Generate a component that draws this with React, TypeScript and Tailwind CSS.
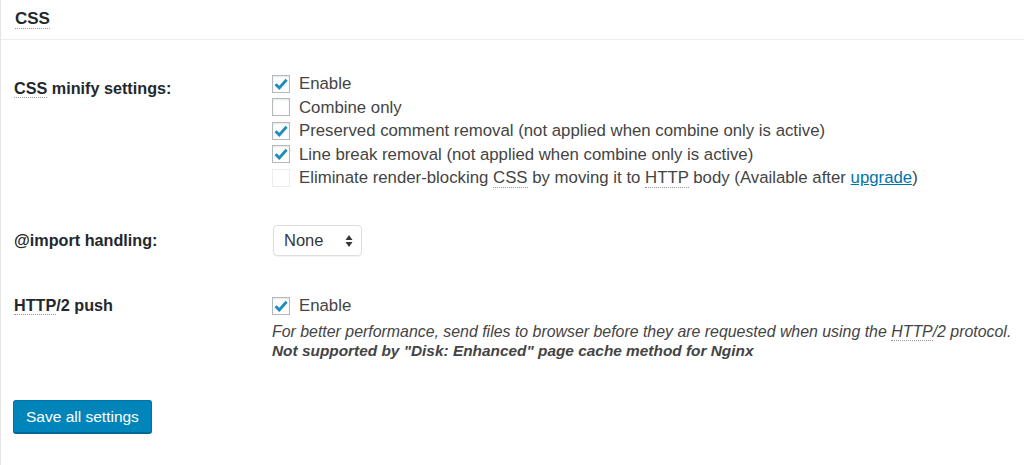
import React from 'react';

const Abbr: React.FC<{ children: React.ReactNode }> = ({ children }) => (
  <abbr className="no-underline border-b border-dotted border-[#999] leading-none">{children}</abbr>
);

const Checkbox: React.FC<{ checked?: boolean; disabled?: boolean }> = ({ checked, disabled }) => (
  <span
    className={`relative inline-block w-[18px] h-[18px] shrink-0 bg-white border ${
      disabled ? 'border-[#ebebeb]' : 'border-[#b4b9be] shadow-[inset_0_1px_2px_rgba(0,0,0,0.1)]'
    }`}
  >
    {checked && (
      <svg className="absolute left-[0px] top-[0px]" width="16" height="16" viewBox="0 0 20 20">
        <path d="M3.2 10.2 L7.8 14.8 L17 4.6" fill="none" stroke="#1e8cbe" strokeWidth="3.6" strokeLinejoin="miter" />
      </svg>
    )}
  </span>
);

const CheckRow: React.FC<{ checked?: boolean; disabled?: boolean; children: React.ReactNode }> = ({
  checked,
  disabled,
  children,
}) => (
  <div className="h-[23.5px] flex items-center gap-[9px]">
    <Checkbox checked={checked} disabled={disabled} />
    <span className="text-[16.8px] text-[#444] whitespace-nowrap">{children}</span>
  </div>
);

export default function App() {
  return (
    <div
      className="w-[1024px] h-[465px] bg-white border-l border-[#e5e5e5] text-[#23282d] overflow-hidden"
      style={{ fontFamily: '"Liberation Sans", Arial, sans-serif' }}
    >
      {/* Header */}
      <div className="h-[40px] border-b border-[#eeeeee] pl-[14px] pt-[8px]">
        <h2 className="text-[17px] font-bold leading-[22px]">
          <Abbr>CSS</Abbr>
        </h2>
      </div>

      {/* CSS minify settings */}
      <div className="flex mt-[32px]">
        <div className="w-[271px] pl-[13px] pt-[4px] text-[16.2px] font-bold leading-[24px]">
          <Abbr>CSS</Abbr> minify settings:
        </div>
        <div className="flex flex-col">
          <CheckRow checked>Enable</CheckRow>
          <CheckRow>Combine only</CheckRow>
          <CheckRow checked>Preserved comment removal (not applied when combine only is active)</CheckRow>
          <CheckRow checked>Line break removal (not applied when combine only is active)</CheckRow>
          <CheckRow disabled>
            Eliminate render-blocking <Abbr>CSS</Abbr> by moving it to <Abbr>HTTP</Abbr> body (Available after{' '}
            <a href="#" className="text-[#0073aa] underline">
              upgrade
            </a>
            )
          </CheckRow>
        </div>
      </div>

      {/* @import handling */}
      <div className="flex items-center mt-[35.5px]">
        <div className="w-[271px] pl-[13px] text-[16.2px] font-bold">@import handling:</div>
        <div className="w-[89px] h-[31px] ml-[1px] border border-[#dddddd] rounded-[4px] shadow-[0_1px_1px_rgba(0,0,0,0.05)] flex items-center justify-between pl-[10px] pr-[8px] text-[16.5px] text-[#32373c]">
          <span>None</span>
          <svg width="8" height="14" viewBox="0 0 8 14">
            <path d="M4 1 L7.5 6 L0.5 6 Z" fill="#32373c" />
            <path d="M4 13 L7.5 8 L0.5 8 Z" fill="#32373c" />
          </svg>
        </div>
      </div>

      {/* HTTP/2 push */}
      <div className="flex mt-[38px]">
        <div className="w-[271px] pl-[13px] text-[16.2px] font-bold leading-[23.5px]">
          <Abbr>HTTP</Abbr>/2 push
        </div>
        <div className="flex flex-col">
          <CheckRow checked>Enable</CheckRow>
          <p className="mt-[4px] text-[15.9px] italic text-[#444] leading-[19px] whitespace-nowrap">
            For better performance, send files to browser before they are requested when using the{' '}
            <Abbr>HTTP</Abbr>/2 protocol.
          </p>
          <p className="text-[15.4px] italic font-bold text-[#444] leading-[19px] whitespace-nowrap">
            Not supported by "Disk: Enhanced" page cache method for Nginx
          </p>
        </div>
      </div>

      {/* Save */}
      <div className="pl-[12px] mt-[40.5px]">
        <button className="h-[33px] px-[12px] bg-[#0085ba] border border-[#0073aa] border-b-[#006799] rounded-[3px] shadow-[0_1px_0_#006799] text-white text-[15.5px] leading-[31px]">
          Save all settings
        </button>
      </div>
    </div>
  );
}
